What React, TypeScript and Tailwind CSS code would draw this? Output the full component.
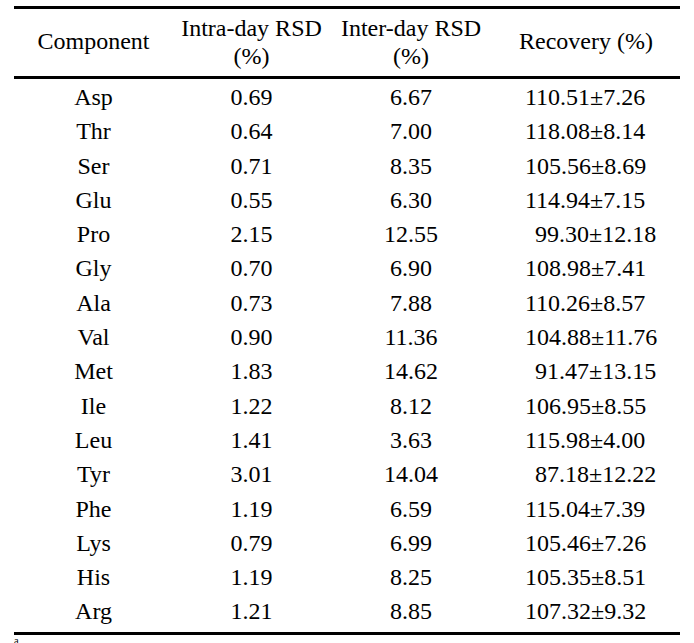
const rows: [string, string, string, string, boolean][] = [
  ["Asp", "0.69", "6.67", "110.51±7.26", false],
  ["Thr", "0.64", "7.00", "118.08±8.14", false],
  ["Ser", "0.71", "8.35", "105.56±8.69", false],
  ["Glu", "0.55", "6.30", "114.94±7.15", false],
  ["Pro", "2.15", "12.55", "99.30±12.18", true],
  ["Gly", "0.70", "6.90", "108.98±7.41", false],
  ["Ala", "0.73", "7.88", "110.26±8.57", false],
  ["Val", "0.90", "11.36", "104.88±11.76", false],
  ["Met", "1.83", "14.62", "91.47±13.15", true],
  ["Ile", "1.22", "8.12", "106.95±8.55", false],
  ["Leu", "1.41", "3.63", "115.98±4.00", false],
  ["Tyr", "3.01", "14.04", "87.18±12.22", true],
  ["Phe", "1.19", "6.59", "115.04±7.39", false],
  ["Lys", "0.79", "6.99", "105.46±7.26", false],
  ["His", "1.19", "8.25", "105.35±8.51", false],
  ["Arg", "1.21", "8.85", "107.32±9.32", false],
];

const cols = "grid grid-cols-[159px_157px_162px_188px]";

export default function App() {
  return (
    <main className="min-h-[643px] bg-white pt-[6px] font-[family-name:Liberation_Serif,serif] text-[24px] text-black">
      <div className="ml-[14px] w-[666px]">
        <div className="h-[3px] bg-black" />
        <div className={`${cols} h-[67px] items-center pb-[1px] text-center leading-[28px]`}>
          <div className="pb-[2px]">Component</div>
          <div>
            Intra-day RSD
            <br />
            (%)
          </div>
          <div>
            Inter-day RSD
            <br />
            (%)
          </div>
          <div className="pb-[2px]">Recovery (%)</div>
        </div>
        <div className="h-[3px] bg-black" />
        <div className="pt-[1px] pb-[3px]">
          {rows.map(([name, intra, inter, rec, pad]) => (
            <div key={name} className={`${cols} h-[34.3px] leading-[34.3px]`}>
              <div className="text-center">{name}</div>
              <div className="text-center">{intra}</div>
              <div className="text-center">{inter}</div>
              <div className={pad ? "pl-[43px]" : "pl-[33px]"}>{rec}</div>
            </div>
          ))}
        </div>
        <div className="h-[3px] bg-black" />
        <div className="pt-[3px] text-[14px] leading-[14px]">
          <sup>a</sup>
        </div>
      </div>
    </main>
  );
}
